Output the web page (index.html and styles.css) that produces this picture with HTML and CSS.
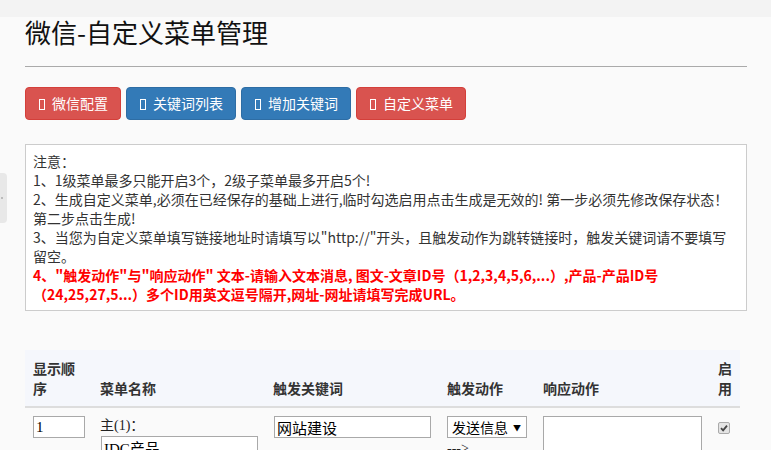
FILE: index.html
```html
<!DOCTYPE html>
<html lang="zh-CN">
<head>
    <meta charset="UTF-8">
    <meta name="viewport" content="width=device-width, initial-scale=1.0">
    <title>微信-自定义菜单管理</title>
    <link rel="stylesheet" href="styles.css">
</head>
<body>

<div class="topbar"></div>
<div class="side-tab"><span></span></div>

<div class="page">
    <h1 class="title">微信-自定义菜单管理</h1>
    <hr class="rule">

    <div class="toolbar">
        <a class="btn btn-red" href="#"><i class="ico"></i>微信配置</a>
        <a class="btn btn-blue" href="#"><i class="ico"></i>关键词列表</a>
        <a class="btn btn-blue" href="#"><i class="ico"></i>增加关键词</a>
        <a class="btn btn-red" href="#"><i class="ico"></i>自定义菜单</a>
    </div>

    <div class="notice">
        <p>注意：</p>
        <p>1、1级菜单最多只能开启3个，2级子菜单最多开启5个!</p>
        <p>2、生成自定义菜单,必须在已经保存的基础上进行,临时勾选启用点击生成是无效的! 第一步必须先修改保存状态！第二步点击生成!</p>
        <p>3、当您为自定义菜单填写链接地址时请填写以"http://"开头，且触发动作为跳转链接时，触发关键词请不要填写留空。</p>
        <p class="warn">4、"触发动作"与"响应动作" 文本-请输入文本消息, 图文-文章ID号（1,2,3,4,5,6,...）,产品-产品ID号（24,25,27,5...）多个ID用英文逗号隔开,网址-网址请填写完成URL。</p>
    </div>

    <table class="menu-table">
        <colgroup>
            <col class="c-order">
            <col class="c-name">
            <col class="c-key">
            <col class="c-action">
            <col class="c-reply">
            <col class="c-on">
        </colgroup>
        <thead>
            <tr>
                <th>显示顺序</th>
                <th>菜单名称</th>
                <th>触发关键词</th>
                <th>触发动作</th>
                <th>响应动作</th>
                <th>启用</th>
            </tr>
        </thead>
        <tbody>
            <tr>
                <td><input class="field order-field" type="text" value="1"></td>
                <td>
                    <div class="menu-label">主(1)：</div>
                    <input class="field name-field" type="text" value="IDC产品">
                </td>
                <td><input class="field key-field" type="text" value="网站建设"></td>
                <td>
                    <div class="select-box">发送信息<span class="caret">▼</span></div>
                    <div class="arrow-text">---&gt;</div>
                </td>
                <td><textarea class="reply-field"></textarea></td>
                <td>
                    <span class="check">
                        <svg width="8" height="8" viewBox="0 0 8 8"><path d="M1 4.2 L3.1 6.3 L7 1.6" fill="none" stroke="#444" stroke-width="1.8"/></svg>
                    </span>
                </td>
            </tr>
        </tbody>
    </table>
</div>

</body>
</html>
```

FILE: styles.css
```css
body {
    margin: 0;
    background-color: #fafafa;
    font-family: "Noto Sans CJK SC", "Liberation Sans", sans-serif;
    font-size: 14px;
    color: #333;
}

.topbar {
    height: 17px;
    background-color: #f3f3f3;
}

/* little slide-out tab stuck on the left edge */
.side-tab {
    position: absolute;
    left: 0;
    top: 173px;
    width: 7px;
    height: 50px;
    background-color: #e8e8e8;
    border-radius: 0 4px 4px 0;
}

.side-tab span {
    position: absolute;
    left: 1px;
    top: 24px;
    width: 2px;
    height: 2px;
    background-color: #bbb;
}

.page {
    width: 722px;
    margin-left: 25px;
}

.title {
    margin: 0;
    font-size: 26px;
    line-height: 30px;
    font-weight: normal;
    color: #111;
}

.rule {
    margin: 19px 0 0 0;
    border: 0;
    border-top: 1px solid #aaa;
}

.toolbar {
    display: flex;
    gap: 5px;
    margin-top: 20px;
}

.btn {
    display: inline-block;
    padding: 6px 12px;
    line-height: 19px;
    font-size: 14px;
    color: #fff;
    text-decoration: none;
    border: 1px solid transparent;
    border-radius: 4px;
}

.btn-red {
    background-color: #d9534f;
    border-color: #d43f3a;
}

.btn-blue {
    background-color: #337ab7;
    border-color: #2e6da4;
}

.ico {
    display: inline-block;
    box-sizing: border-box;
    width: 6px;
    height: 11px;
    margin: 0 7px 0 1px;
    border: 1px solid #fff;
    vertical-align: -1px;
}

.notice {
    margin-top: 24px;
    padding: 7px 12px 6px 7px;
    background-color: #fff;
    border: 1px solid #ccc;
    line-height: 19px;
}

.notice p {
    margin: 0;
}

.notice .warn {
    color: #f00;
    font-weight: bold;
}

.menu-table {
    width: 715px;
    margin-top: 39px;
    border-collapse: collapse;
    table-layout: fixed;
}

.c-order { width: 67px; }
.c-name { width: 173px; }
.c-key { width: 174px; }
.c-action { width: 96px; }
.c-reply { width: 175px; }
.c-on { width: 30px; }

.menu-table th {
    padding: 8px;
    text-align: left;
    vertical-align: bottom;
    background-color: #f5f7fc;
    border-bottom: 2px solid #ddd;
    line-height: 20px;
    font-weight: bold;
    color: #333;
}

.menu-table td {
    padding: 8px;
    vertical-align: top;
    font-family: "Liberation Serif", "Noto Sans CJK SC", serif;
    color: #222;
}

.field {
    box-sizing: border-box;
    height: 22px;
    padding: 0 2px;
    border: 1px solid #a9a9a9;
    background: #fff;
    font-family: "Liberation Serif", "Noto Sans CJK SC", serif;
    font-size: 15px;
    color: #000;
}

.order-field { width: 52px; }
.key-field { width: 157px; margin-left: 1px; }
.name-field { width: 157px; margin-left: 1px; }

.menu-label {
    line-height: 20px;
}

.select-box {
    box-sizing: border-box;
    width: 80px;
    height: 22px;
    padding: 0 0 0 4px;
    border: 1px solid #a9a9a9;
    background: #fff;
    line-height: 20px;
    font-family: "Noto Sans CJK SC", sans-serif;
    color: #000;
}

.caret {
    font-size: 8px;
    margin-left: 5px;
    vertical-align: 2px;
}

.arrow-text {
    margin-top: 3px;
    line-height: 16px;
}

.reply-field {
    display: block;
    box-sizing: border-box;
    width: 159px;
    height: 60px;
    border: 1px solid #a9a9a9;
    resize: vertical;
}

.check {
    display: inline-block;
    box-sizing: border-box;
    width: 12px;
    height: 12px;
    margin-top: 6px;
    border: 1px solid #aaa;
    border-radius: 2px;
    background: #e4e4e4;
    text-align: center;
    line-height: 8px;
}

.check svg {
    margin-top: 1px;
}
```
